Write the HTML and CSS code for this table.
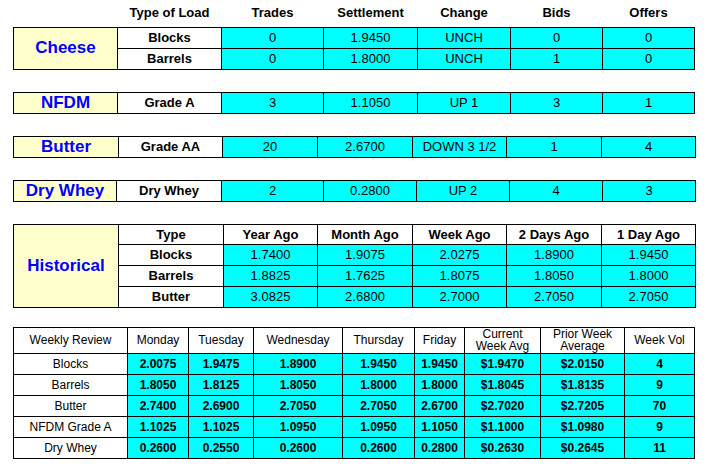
FILE: index.html
```html
<!DOCTYPE html>
<html lang="en">
<head>
<meta charset="utf-8">
<title>Dairy Market Summary</title>
<link rel="stylesheet" href="styles.css">
</head>
<body>
<div class="page">
  <table class="market cheese">
    <colgroup><col style="width:104px"><col style="width:104px"><col style="width:102px"><col style="width:94px"><col style="width:93px"><col style="width:92px"><col style="width:92px"></colgroup>
    <thead>
      <tr class="head-row">
        <th class="blank"></th><th>Type of Load</th><th>Trades</th><th>Settlement</th><th>Change</th><th>Bids</th><th>Offers</th>
      </tr>
    </thead>
    <tbody>
      <tr><td class="label" rowspan="2">Cheese</td><td class="type">Blocks</td><td class="val">0</td><td class="val">1.9450</td><td class="val">UNCH</td><td class="val">0</td><td class="val">0</td></tr>
      <tr><td class="type">Barrels</td><td class="val">0</td><td class="val">1.8000</td><td class="val">UNCH</td><td class="val">1</td><td class="val">0</td></tr>
    </tbody>
  </table>

  <table class="market single">
    <colgroup><col style="width:104px"><col style="width:104px"><col style="width:102px"><col style="width:94px"><col style="width:93px"><col style="width:92px"><col style="width:92px"></colgroup>
    <tr><td class="label">NFDM</td><td class="type">Grade A</td><td class="val">3</td><td class="val">1.1050</td><td class="val">UP 1</td><td class="val">3</td><td class="val">1</td></tr>
  </table>

  <table class="market single">
    <colgroup><col style="width:105px"><col style="width:104px"><col style="width:95px"><col style="width:95px"><col style="width:94px"><col style="width:95px"><col style="width:94px"></colgroup>
    <tr><td class="label">Butter</td><td class="type">Grade AA</td><td class="val">20</td><td class="val">2.6700</td><td class="val">DOWN 3 1/2</td><td class="val">1</td><td class="val">4</td></tr>
  </table>

  <table class="market single">
    <colgroup><col style="width:103px"><col style="width:105px"><col style="width:102px"><col style="width:93px"><col style="width:93px"><col style="width:93px"><col style="width:93px"></colgroup>
    <tr><td class="label">Dry Whey</td><td class="type">Dry Whey</td><td class="val">2</td><td class="val">0.2800</td><td class="val">UP 2</td><td class="val">4</td><td class="val">3</td></tr>
  </table>

  <table class="market historical">
    <colgroup><col style="width:105px"><col style="width:105px"><col style="width:94px"><col style="width:95px"><col style="width:94px"><col style="width:95px"><col style="width:94px"></colgroup>
    <tr class="hist-head"><td class="label" rowspan="4">Historical</td><td class="type">Type</td><td class="type">Year Ago</td><td class="type">Month Ago</td><td class="type">Week Ago</td><td class="type">2 Days Ago</td><td class="type">1 Day Ago</td></tr>
    <tr><td class="type">Blocks</td><td class="val">1.7400</td><td class="val">1.9075</td><td class="val">2.0275</td><td class="val">1.8900</td><td class="val">1.9450</td></tr>
    <tr><td class="type">Barrels</td><td class="val">1.8825</td><td class="val">1.7625</td><td class="val">1.8075</td><td class="val">1.8050</td><td class="val">1.8000</td></tr>
    <tr><td class="type">Butter</td><td class="val">3.0825</td><td class="val">2.6800</td><td class="val">2.7000</td><td class="val">2.7050</td><td class="val">2.7050</td></tr>
  </table>

  <table class="weekly">
    <colgroup><col style="width:114px"><col style="width:61px"><col style="width:65px"><col style="width:89px"><col style="width:72px"><col style="width:50px"><col style="width:76px"><col style="width:84px"><col style="width:70px"></colgroup>
    <tr class="wk-head"><th>Weekly Review</th><th>Monday</th><th>Tuesday</th><th>Wednesday</th><th>Thursday</th><th>Friday</th><th class="two-line">Current<br>Week Avg</th><th class="two-line">Prior Week<br>Average</th><th>Week Vol</th></tr>
    <tr><td class="name">Blocks</td><td class="num">2.0075</td><td class="num">1.9475</td><td class="num">1.8900</td><td class="num">1.9450</td><td class="num">1.9450</td><td class="num">$1.9470</td><td class="num">$2.0150</td><td class="num">4</td></tr>
    <tr><td class="name">Barrels</td><td class="num">1.8050</td><td class="num">1.8125</td><td class="num">1.8050</td><td class="num">1.8000</td><td class="num">1.8000</td><td class="num">$1.8045</td><td class="num">$1.8135</td><td class="num">9</td></tr>
    <tr><td class="name">Butter</td><td class="num">2.7400</td><td class="num">2.6900</td><td class="num">2.7050</td><td class="num">2.7050</td><td class="num">2.6700</td><td class="num">$2.7020</td><td class="num">$2.7205</td><td class="num">70</td></tr>
    <tr><td class="name">NFDM Grade A</td><td class="num">1.1025</td><td class="num">1.1025</td><td class="num">1.0950</td><td class="num">1.0950</td><td class="num">1.1050</td><td class="num">$1.1000</td><td class="num">$1.0980</td><td class="num">9</td></tr>
    <tr><td class="name">Dry Whey</td><td class="num">0.2600</td><td class="num">0.2550</td><td class="num">0.2600</td><td class="num">0.2600</td><td class="num">0.2800</td><td class="num">$0.2630</td><td class="num">$0.2645</td><td class="num">11</td></tr>
  </table>
</div>
</body>
</html>
```

FILE: styles.css
```css
html, body {
  margin: 0;
  padding: 0;
  background: #ffffff;
}

body {
  font-family: "Liberation Sans", Arial, sans-serif;
  color: #000000;
}

.page {
  display: flex;
  flex-direction: column;
  align-items: flex-start;
  padding-left: 13px;
}

table {
  border-collapse: collapse;
  table-layout: fixed;
}

td, th {
  padding: 0;
  text-align: center;
  vertical-align: middle;
  white-space: nowrap;
  overflow: hidden;
}

.market {
  font-size: 13px;
  margin-top: 22px;
}

.market.cheese {
  margin-top: 0;
}

.market tr {
  height: 21px;
}

.market .hist-head {
  height: 20px;
}

.market td {
  border: 1px solid #000000;
}

.market .head-row {
  height: 27px;
}

.market .head-row th {
  border: none;
  font-weight: bold;
  padding-bottom: 1px;
}

.market .label {
  background: #ffffcc;
  color: #0000ff;
  font-weight: bold;
  font-size: 17px;
}

.market .type {
  background: #ffffff;
  font-weight: bold;
}

.market .val {
  background: #00ffff;
  font-weight: normal;
}

.weekly {
  font-size: 12px;
  margin-top: 19px;
}

.weekly td, .weekly th {
  border: 1px solid #000000;
}

.weekly tr {
  height: 21px;
}

.weekly .wk-head {
  height: 25px;
}

.weekly .wk-head th {
  font-weight: normal;
  background: #ffffff;
}

.weekly .wk-head .two-line {
  line-height: 12.5px;
}

.weekly .name {
  background: #ffffff;
}

.weekly .num {
  background: #00ffff;
  font-weight: bold;
}
```
